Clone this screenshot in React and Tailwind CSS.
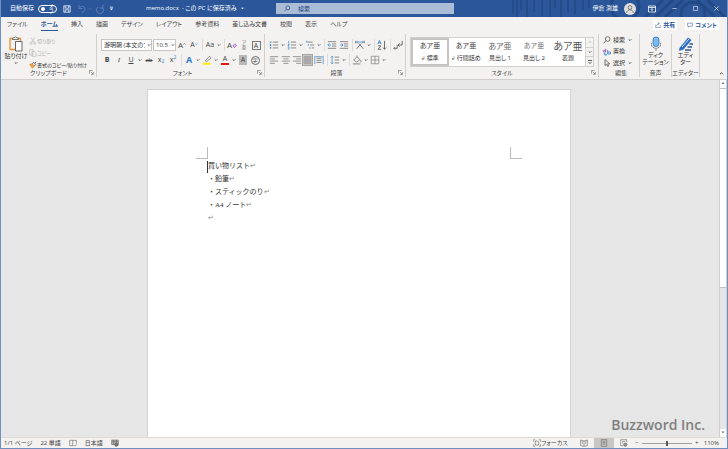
import React from "react";

const tabs = ["ファイル", "ホーム", "挿入", "描画", "デザイン", "レイアウト", "参考資料", "差し込み文書", "校閲", "表示", "ヘルプ"];

const styles = [
  { name: "標準", mark: true, sample: "text-[7px]" },
  { name: "行間詰め", mark: true, sample: "text-[7px]" },
  { name: "見出し 1", sample: "text-[8px] text-[#666]" },
  { name: "見出し 2", sample: "text-[7px] text-[#777]" },
  { name: "表題", sample: "text-[10px] text-[#555]" },
];

const lines = ["買い物リスト", "・鉛筆", "・スティックのり", "・A4 ノート", ""];

// Small line drawing on a 12x12 grid
const Icon = ({ children, className = "size-2.5" }) => (
  <svg viewBox="0 0 12 12" fill="none" stroke="#555" strokeWidth="0.8" className={className} aria-hidden="true">
    {children}
  </svg>
);

const Chevron = ({ className = "w-1.5 h-1.5" }) => (
  <svg viewBox="0 0 6 6" fill="none" stroke="currentColor" strokeWidth="0.8" className={className} aria-hidden="true">
    <path d="M1.700 2.300 3 3.600 4.300 2.300" />
  </svg>
);

const Tool = ({ label, caret, className = "w-3", children }) => (
  <button type="button" aria-label={label} className="flex items-center shrink-0 text-[#444]">
    <span className={`flex items-center justify-center h-3 ${className}`}>{children}</span>
    {caret && <Chevron />}
  </button>
);

const Sep = () => (
  <span className="flex justify-center w-1 shrink-0">
    <span className="w-px h-3 bg-[#dcdbda]" />
  </span>
);

const Launcher = () => (
  <button type="button" aria-label="詳細" className="absolute right-0.5 bottom-0.5">
    <svg viewBox="0 0 6 6" fill="none" stroke="#666" strokeWidth="0.7" className="size-[5px]">
      <path d="M.5 4.500v-4h4M2 2l3 3M5.300 2.500v2.800H2.500" />
    </svg>
  </button>
);

const Group = ({ title, launcher, className = "", children }) => (
  <section className={`relative flex flex-col shrink-0 border-r border-[#d2d0ce] ${className}`}>
    <div className="flex-1 min-h-0">{children}</div>
    <h2 className="h-2 text-center text-[6px] leading-2 text-[#444]">{title}</h2>
    {launcher && <Launcher />}
  </section>
);

const Rows = ({ d }) => (
  <Icon>
    <path d={d} stroke="#666" />
  </Icon>
);

const TitleBar = () => (
  <header className="relative flex items-center h-[17px] shrink-0 bg-[#2b579a] text-white text-[6px] overflow-hidden">
    <svg viewBox="0 0 250 17" fill="none" stroke="#234a86" className="absolute right-0 top-0 w-[250px] h-[17px]" aria-hidden="true">
      <path strokeWidth="1.5" d="M36 0v14M40 0v17M44 0v10M50 0v17M57 0v12M65 0v16M73 0v17M78 0v8M84 0v17M91 0v12M98 0v14M106 0v10M112 0v8" />
      <circle cx="148" cy="6" r="14" strokeWidth="3" />
      <path strokeWidth="3" d="M168 17 186 0M178 17 196 0M188 17 206 0M230 0l18 17M220 0l18 17" />
      <circle cx="216" cy="14" r="12" strokeWidth="3" />
    </svg>
    <div className="relative flex items-center flex-1 min-w-0 pl-[9px]">
      <label className="flex items-center gap-1">
        自動保存
        <input type="checkbox" className="peer sr-only" />
        <span className="flex items-center gap-1 w-[19px] h-2 px-0.5 border border-white rounded-full text-[5px] leading-none">
          <span className="size-1 shrink-0 rounded-full bg-white" />
          オフ
        </span>
      </label>
      <button type="button" aria-label="上書き保存" className="ml-1.5">
        <svg viewBox="0 0 10 10" fill="none" stroke="#fff" strokeWidth="0.9" className="size-2">
          <path d="M1 1h8v8H1zM2.800 1v3h4.400V1M2.800 9V6h4.400v3" />
        </svg>
      </button>
      <button type="button" aria-label="元に戻す" className="flex items-center ml-1.5 text-[#5b7db3]">
        <svg viewBox="0 0 10 10" fill="none" stroke="currentColor" className="size-2.5">
          <path d="M2 1v3.500h3.500M2 4.500C4 1.500 8 2 8 5c0 2-2 3-3.500 4" />
        </svg>
        <Chevron />
      </button>
      <button type="button" aria-label="やり直し" className="ml-0.5 text-[#5b7db3]">
        <svg viewBox="0 0 10 10" fill="none" stroke="currentColor" className="size-2.5">
          <path d="M8 1v3H5M8 4a3.600 3.600 0 1 1-5-1" />
        </svg>
      </button>
      <button type="button" aria-label="ツール バーのカスタマイズ" className="ml-1">
        <svg viewBox="0 0 6 6" className="size-[5px]" fill="#fff">
          <path d="M1 1h4v.8H1zM1 3h4L3 5z" />
        </svg>
      </button>
      <div className="flex items-center gap-1 mx-auto whitespace-nowrap">
        <h1>memo.docx&nbsp; - この PC に保存済み</h1>
        <svg viewBox="0 0 4 4" className="size-[3px]" fill="#fff">
          <path d="M0 1h4L2 3z" />
        </svg>
      </div>
    </div>
    <label className="relative flex items-center gap-2 w-[178px] h-[11px] px-2 bg-[#abbcd7]">
      <svg viewBox="0 0 8 8" fill="none" stroke="#1f3f77" strokeWidth="0.8" className="size-[7px]">
        <circle cx="4.800" cy="3.200" r="2.400" />
        <path d="M3 5 .7 7.300" />
      </svg>
      <input type="search" aria-label="検索" placeholder="検索" className="w-full h-2 text-[6px] leading-2 outline-none placeholder:text-[#1f3f77]" />
    </label>
    <div className="relative flex items-center justify-end flex-1 pr-2">
      <span>伊倉 渕雄</span>
      <svg viewBox="0 0 12 12" className="size-3 ml-1.5" aria-hidden="true">
        <circle cx="6" cy="6" r="6" fill="#e1dfdd" />
        <g fill="none" stroke="#666" strokeWidth="0.8">
          <circle cx="6" cy="4.500" r="1.900" />
          <path d="M2.700 9.800c.2-4 6.400-4 6.600 0" />
        </g>
      </svg>
      <button type="button" aria-label="リボンの表示オプション" className="ml-3">
        <svg viewBox="0 0 8 8" fill="none" stroke="#fff" strokeWidth="0.8" className="size-2">
          <path d="M.5 1h7v6h-7zM.5 2.500h7M4 6V3.700M2.800 4.800 4 3.600l1.200 1.200" />
        </svg>
      </button>
      <button type="button" aria-label="最小化" className="ml-4">
        <svg viewBox="0 0 6 6" stroke="#fff" strokeWidth="0.7" className="size-[5px]"><path d="M.5 3h5" /></svg>
      </button>
      <button type="button" aria-label="最大化" className="ml-4">
        <svg viewBox="0 0 6 6" fill="none" stroke="#fff" strokeWidth="0.7" className="size-[5px]"><path d="M.5.5h5v5h-5z" /></svg>
      </button>
      <button type="button" aria-label="閉じる" className="ml-4">
        <svg viewBox="0 0 6 6" stroke="#fff" strokeWidth="0.8" className="size-[5px]"><path d="m.5.5 5 5m0-5-5 5" /></svg>
      </button>
    </div>
  </header>
);

const TabRow = () => (
  <nav className="flex items-center h-4 shrink-0 pl-1.5 pr-2 text-[6px] text-[#444]">
    <div className="flex gap-[13px]">
      {tabs.map((tab) => (
        <a
          key={tab}
          href="#"
          className={`h-3 leading-[11px] whitespace-nowrap ${tab === "ホーム" ? "border-b border-[#2b579a] font-bold text-[#2b579a]" : ""}`}
        >
          {tab}
        </a>
      ))}
    </div>
    <div className="flex gap-2 ml-auto text-[#2b579a] font-bold">
      <button type="button" className="flex items-center gap-0.5 h-2.5 px-0.5 bg-white">
        <svg viewBox="0 0 8 8" fill="none" stroke="currentColor" strokeWidth="0.7" className="size-1.5">
          <path d="M1 3.500v4h6v-3M2.500 5c0-2 1.500-3 3-3M4.300.5 6 2 4.300 3.500" />
        </svg>
        共有
      </button>
      <button type="button" className="flex items-center gap-0.5 h-2.5 px-0.5 bg-white">
        <svg viewBox="0 0 8 8" fill="none" stroke="currentColor" strokeWidth="0.7" className="size-1.5">
          <path d="M.8 1.500h6.400v4H3.500L2 7V5.500H.8z" />
        </svg>
        コメント
      </button>
    </div>
  </nav>
);

const Clipboard = () => (
  <Group title="クリップボード" launcher className="w-24">
    <div className="flex gap-0.5 pl-1">
      <button type="button" className="flex flex-col items-center w-[22px] pt-0.5 text-[6px] leading-2 text-[#333] whitespace-nowrap">
        <svg viewBox="0 0 16 16" fill="none" className="size-4">
          <path d="M5 2.500H2v11h5M10 2.500h2.500V5" stroke="#e8912d" strokeWidth="1.300" />
          <path d="M4.500 3.500V2h1.700c.2-1.500 2.400-1.500 2.600 0h1.700v1.500z" fill="#fff" stroke="#555" strokeWidth="0.8" />
          <path d="M7.500 5.500h6.500v9.500H7.500z" fill="#fff" stroke="#555" strokeWidth="0.9" />
        </svg>
        貼り付け
        <Chevron />
      </button>
      <div className="flex flex-col pt-px text-[5px] leading-3 whitespace-nowrap text-[#b3b0ad]">
        <button type="button" disabled className="flex items-center h-3">
          <Icon className="size-2"><path d="m3 1 4.500 7M8.500 1 4 8" stroke="#aaa" /><circle cx="3" cy="9.500" r="1.600" stroke="#aaa" /><circle cx="8.500" cy="9.500" r="1.600" stroke="#aaa" /></Icon>
          切り取り
        </button>
        <button type="button" disabled className="flex items-center h-3">
          <Icon className="size-2"><path d="M1 1h5v8H1zM4.500 3.500H8l2.500 2.500v5h-6z" stroke="#aaa" fill="#f3f2f1" /></Icon>
          コピー
        </button>
        <button type="button" className="flex items-center h-3 text-[#333]">
          <Icon className="size-2">
            <path d="m1 5 4-1 3 4-3 3z" fill="#f0a040" stroke="#d97c12" />
            <path d="m5 4 2-2 3 3-2 2.500M8.500 3.500 11 1" stroke="#444" strokeWidth="1.200" />
          </Icon>
          書式のコピー/貼り付け
        </button>
      </div>
    </div>
  </Group>
);

const FontGroup = () => (
  <Group title="フォント" launcher className="w-[168px] pl-1">
    <div className="flex items-center pt-[5px]">
      <div className="relative w-[51px] mr-px">
        <select aria-label="フォント" className="block w-full h-3 pl-0.5 pr-1.5 border border-[#c8c6c4] bg-white appearance-none text-[6px] leading-2.5 text-[#333]">
          <option>游明朝 (本文のフォント)</option>
        </select>
        <Chevron className="absolute right-0 top-[3px] size-1.5 pointer-events-none" />
      </div>
      <div className="relative w-[23px]">
        <select aria-label="フォント サイズ" className="block w-full h-3 pl-0.5 border border-[#c8c6c4] bg-white appearance-none text-[6px] leading-2.5 text-[#333]">
          <option>10.5</option>
        </select>
        <Chevron className="absolute right-0 top-[3px] size-1.5 pointer-events-none" />
      </div>
      <Tool label="フォント サイズの拡大"><span className="text-[8px]">A</span><Icon className="w-[3px] h-2"><path d="m1 4 5-4 5 4" stroke="#444" strokeWidth="2" /></Icon></Tool>
      <Tool label="フォント サイズの縮小"><span className="text-[7px]">A</span><Icon className="w-[3px] h-2"><path d="m1 0 5 4 5-4" stroke="#2b88c8" strokeWidth="2" /></Icon></Tool>
      <Sep />
      <Tool label="文字種の変換" caret><span className="text-[7px]">Aa</span></Tool>
      <Sep />
      <Tool label="書式のクリア"><span className="text-[8px]">A</span><Icon className="w-[5px] h-2"><path d="m2 8 5-5 4 4-5 5z" stroke="#a33fb5" strokeWidth="1.500" fill="#e3bdea" /></Icon></Tool>
      <Tool label="ルビ"><span className="flex flex-col text-[5px] leading-[5px] text-[#777]"><span>ア</span><span>亜</span></span></Tool>
      <Tool label="囲み線"><span className="w-[9px] h-[9px] border border-[#777] text-[7px] leading-[7px]">A</span></Tool>
    </div>
    <div className="flex items-center pt-[3px]">
      <Tool label="太字"><b className="text-[7px]">B</b></Tool>
      <Tool label="斜体"><i className="text-[7px] font-['Liberation_Serif',serif]">I</i></Tool>
      <Tool label="下線" caret><u className="text-[7px]">U</u></Tool>
      <Tool label="取り消し線"><s className="text-[6px]">ab</s></Tool>
      <Tool label="下付き"><span className="text-[7px]">x<sub className="text-[5px] text-[#2b88c8]">2</sub></span></Tool>
      <Tool label="上付き"><span className="text-[7px]">x<sup className="text-[5px] text-[#2b88c8]">2</sup></span></Tool>
      <Sep />
      <Tool label="文字の効果" caret><b className="text-[9px] text-[#2b7cc9]">A</b></Tool>
      <Tool label="蛍光ペン" caret><Icon><path d="m4 7 5-5.500L11 3.500 5.500 8z" stroke="#555" fill="#fff" /><path d="M1 10.500h9" stroke="#ffee00" strokeWidth="2.400" /></Icon></Tool>
      <Tool label="フォントの色" caret><span className="w-2 text-[7px] leading-2 border-b-2 border-[#e81313]">A</span></Tool>
      <Tool label="文字の網かけ"><span className="w-2 h-2.5 bg-[#b9b8b7] text-[7px] leading-2.5">A</span></Tool>
      <Tool label="囲い文字"><span className="w-[9px] h-[9px] border border-[#666] rounded-full text-[5px] leading-[7px]">字</span></Tool>
    </div>
  </Group>
);

const Paragraph = () => (
  <Group title="段落" launcher className="w-[141px] pl-[3px]">
    <div className="flex items-center pt-[5px]">
      <Tool label="箇条書き" caret><Icon><path d="M4.500 2.500H11M4.500 6H11M4.500 9.500H11" /><path d="M1 2.500h1.700M1 6h1.700M1 9.500h1.700" stroke="#2b7cc9" strokeWidth="1.600" /></Icon></Tool>
      <Tool label="段落番号" caret><Icon><path d="M4.500 2.500H11M4.500 6H11M4.500 9.500H11" /><path d="M2 1v3M1 5h1.500v1L1 7h1.700M1 8.500h1.500v2.500H1" stroke="#2b7cc9" /></Icon></Tool>
      <Tool label="アウトライン" caret><Icon><path d="M3.500 2.500H9M6 6h5M8 9.500h3" /><path d="M1 1.500h1.500v2M4 5v2M6 8.500v2" stroke="#2b7cc9" /></Icon></Tool>
      <Sep />
      <Tool label="インデントを減らす"><Icon><path d="M1 2h10M6 4.700h5M6 7.300h5M1 10h10" /><path d="M5 6H1m2-2L1 6l2 2" stroke="#2b7cc9" /></Icon></Tool>
      <Tool label="インデントを増やす"><Icon><path d="M1 2h10M6 4.700h5M6 7.300h5M1 10h10" /><path d="M1 6h4M3 4l2 2-2 2" stroke="#2b7cc9" /></Icon></Tool>
      <Sep />
      <Tool label="拡張書式" caret><Icon><path d="m2 10.500 5-6M10 10.500 5 4.500M1 1v3M11 1v3" strokeWidth="1" /><path d="M2 2.500h8M3.500 1 2 2.500 3.500 4M8.500 1 10 2.500 8.500 4" stroke="#2b7cc9" /></Icon></Tool>
      <Sep />
      <Tool label="並べ替え">
        <Icon>
          <path d="m1 5 2-4.500L5 5M1.700 3.500h2.600" stroke="#2b7cc9" strokeWidth="1" />
          <path d="M1.200 7h3.500L1.200 11.200h3.800M9 1v10M7 9l2 2 2-2" strokeWidth="1" />
        </Icon>
      </Tool>
      <Sep />
      <Tool label="編集記号の表示"><Icon><path d="M11 1v5H6m2-2L6 6l2 2M5 6v4H1m1.500-1.500L1 10l1.500 1.500" strokeWidth="1" /></Icon></Tool>
    </div>
    <div className="flex items-center pt-[3px]">
      <Tool label="左揃え"><Rows d="M1 2h10M1 4.700h6M1 7.300h10M1 10h6" /></Tool>
      <Tool label="中央揃え" className="w-[11px]"><Rows d="M1 2h10M3 4.700h6M1 7.300h10M3 10h6" /></Tool>
      <Tool label="右揃え" className="w-[11px]"><Rows d="M1 2h10M5 4.700h6M1 7.300h10M5 10h6" /></Tool>
      <Tool label="両端揃え" className="w-[11px] bg-[#c8c6c4] border border-[#a8a6a4]"><Rows d="M1 2h10M1 4.700h10M1 7.300h10M1 10h10" /></Tool>
      <Tool label="均等割り付け"><Icon><path d="M3 4h6M3 6.500h6M3 9h6" /><path d="M1 1v10M11 1v10M2 2h8" stroke="#2b7cc9" /></Icon></Tool>
      <Sep />
      <Tool label="行間" caret><Icon><path d="M5.500 2.500H11M5.500 6H11M5.500 9.500H11" /><path d="M2.500 1.500v9M1 3l1.500-1.500L4 3M1 9l1.500 1.500L4 9" stroke="#2b7cc9" /></Icon></Tool>
      <Sep />
      <Tool label="塗りつぶし" caret><Icon><path d="m2 6 4-4 3.500 3.500-4 3zM6 2V.5M10 6c1.500 1.500 1 2.500 0 2.500" /><path d="M1 10.700h9" stroke="#8a8886" strokeWidth="1.200" /></Icon></Tool>
      <Tool label="罫線" caret><Icon><path d="M1.500 1.500h9v9h-9zM6 1.500v9M1.500 6h9" stroke="#777" /></Icon></Tool>
    </div>
  </Group>
);

const Styles = () => (
  <Group title="スタイル" launcher className="flex-1 min-w-[193px] px-1">
    <div className="flex h-[30px] mt-[3px] border border-[#d2d0ce] bg-white">
      {styles.map((s, i) => (
        <button
          key={s.name}
          type="button"
          className={`flex flex-col items-center justify-center flex-1 gap-1 whitespace-nowrap ${i === 0 ? "border-2 border-[#c6c4c2]" : ""}`}
        >
          <span className={`h-2 leading-2 ${s.sample}`}>あア亜</span>
          <span className="text-[6px] leading-2 text-[#333]">
            {s.mark && <span className="text-[5px]">↲ </span>}
            {s.name}
          </span>
        </button>
      ))}
      <div className="flex flex-col w-2 border-l border-[#d2d0ce] divide-y divide-[#d2d0ce] bg-[#f3f2f1]">
        <button type="button" aria-label="上へ" className="flex items-center justify-center flex-1 text-[#b3b0ad]"><Chevron className="size-1.5 rotate-180" /></button>
        <button type="button" aria-label="下へ" className="flex items-center justify-center flex-1"><Chevron /></button>
        <button type="button" aria-label="その他" className="flex items-center justify-center flex-1">
          <svg viewBox="0 0 6 6" className="size-1.5" fill="none" stroke="#333" strokeWidth="0.8"><path d="M1 1.500h4M1.500 3 3 4.500 4.500 3" /></svg>
        </button>
      </div>
    </div>
  </Group>
);

const Ribbon = () => (
  <div className="relative flex h-[46px] shrink-0 pt-px pb-0.5 text-[#444]">
    <Clipboard />
    <FontGroup />
    <Paragraph />
    <Styles />
    <Group title="編集" className="w-[41px] pl-1">
      <div className="flex flex-col text-[6px] text-[#333]">
        <button type="button" className="flex items-center gap-0.5 h-3">
          <Icon className="size-2"><circle cx="7" cy="4.500" r="3.500" strokeWidth="1.200" /><path d="M4.500 7 1 11" strokeWidth="1.200" /></Icon>
          検索 <Chevron />
        </button>
        <button type="button" className="flex items-center gap-0.5 h-[11px]">
          <Icon className="size-2"><path d="M4 1v5H1V3.500h3" stroke="#a33fb5" strokeWidth="1.200" /><path d="M7 3v6h4V6H7M2 7v3h3M4 8.500 5.500 10 4 11.500" stroke="#2b7cc9" strokeWidth="1.200" /></Icon>
          置換
        </button>
        <button type="button" className="flex items-center gap-0.5 h-3">
          <Icon className="size-2"><path d="M3 .8v9l2.300-2L7 11.300l1.500-.8L7 7.200h3z" strokeWidth="1.200" /></Icon>
          選択 <Chevron />
        </button>
      </div>
    </Group>
    <Group title="音声" className="w-8">
      <button type="button" className="flex flex-col items-center w-full pt-0.5 text-[6px] leading-[7px] text-[#333]">
        <svg viewBox="0 0 16 16" fill="none" className="size-4">
          <rect x="5" y="1" width="6" height="9.500" rx="3" fill="#7cb9ea" stroke="#2b7cc9" strokeWidth="0.8" />
          <path d="M3.500 7v1.500c0 5 9 5 9 0V7M8 12.500V15" stroke="#777" strokeWidth="0.8" />
        </svg>
        ディク<br />テーション
      </button>
    </Group>
    <Group title="エディター" className="w-[28px]">
      <button type="button" className="flex flex-col items-center w-full pt-0.5 text-[6px] leading-[7px] text-[#333]">
        <svg viewBox="0 0 16 16" fill="none" className="size-4">
          <path d="m1.500 12 8.500-10.500 3.500 2.500L5.500 13.500 1 15z" fill="#2b6cc4" />
          <path d="m4 11 7-8" stroke="#cfe2f7" />
          <path d="M11.500 8H15M9.500 11H14M7 14h6" stroke="#2b579a" strokeWidth="1.600" />
        </svg>
        エディ<br />ター
      </button>
    </Group>
    <button type="button" aria-label="リボンを折りたたむ" className="self-end ml-auto w-[27px] pl-[18px]">
      <Chevron className="size-[7px] rotate-180" />
    </button>
  </div>
);

const Document = () => (
  <main className="relative flex flex-1 min-h-0 border-t border-[#d0cfce] bg-[#e6e6e6]">
    <div className="flex-1 min-w-0 pl-5 pr-[22px] pt-[9px]">
      <article className="w-full max-w-[424px] h-full mx-auto px-12 pt-[57px] border border-b-0 border-[#d4d4d4] bg-white">
        <div className="flex justify-between">
          <span className="size-3 border-r border-b border-[#bbb]" />
          <span className="size-3 border-l border-b border-[#bbb]" />
        </div>
        <div className="relative pl-3 pt-px text-[7px] leading-[13px] text-[#333] font-['Liberation_Serif','Noto_Sans_CJK_JP',serif] [font-feature-settings:normal]">
          <span className="absolute left-[11px] top-0.5 w-px h-3 bg-[#333]" />
          {lines.map((line, i) => (
            <p key={i}>
              {line}
              <span className="text-[#888]">↵</span>
            </p>
          ))}
        </div>
      </article>
    </div>
    <div className="flex flex-col w-2 border-x border-[#d0cfce] bg-[#e6e6e6]">
      <button type="button" aria-label="上へスクロール" className="flex justify-center h-2 bg-white">
        <svg viewBox="0 0 6 6" className="size-1.5" fill="#777"><path d="M1.500 4h3L3 2z" /></svg>
      </button>
      <div className="h-[56%] border-y border-[#c0c0c0] bg-white" />
      <button type="button" aria-label="下へスクロール" className="flex justify-center h-2 mt-auto bg-white">
        <svg viewBox="0 0 6 6" className="size-1.5" fill="#777"><path d="M1.500 2.500h3L3 4.500z" /></svg>
      </button>
    </div>
    <div className="absolute right-[22px] bottom-0.5 text-sm font-semibold text-[#808080] font-['Open_Sans',sans-serif]">Buzzword Inc.</div>
  </main>
);

const StatusBar = () => (
  <footer className="flex items-center h-[11px] shrink-0 pl-[3px] pr-2 border-t border-[#dcdbda] bg-[#f3f2f1] text-[6px] leading-2 text-[#444] whitespace-nowrap">
    <div className="flex items-center gap-2">
      <span>1/1 ページ</span>
      <span>22 単語</span>
      <Icon className="size-2"><path d="M1 2h4.500v8H1zM5.500 2H11v5M5.500 10H7M8 9.500l1.200 1.200L11.500 8" /></Icon>
      <span>日本語</span>
      <Icon className="size-2"><path d="M1 1.500h10v7H1zM1 4h10M4 1.500v7M8 1.500v7" fill="#bbb" /><circle cx="8" cy="8.500" r="2.500" fill="#777" /></Icon>
    </div>
    <div className="flex items-center ml-auto">
      <button type="button" className="flex items-center mr-1.5">
        <Icon className="size-2"><path d="M1 4V1h2M9 1h2v3M1 8v3h2M9 11h2V8M3.500 3h3.500l1.500 1.500V9h-5z" /></Icon>
        フォーカス
      </button>
      <button type="button" aria-label="閲覧モード" className="flex justify-center w-5">
        <Icon className="size-2"><path d="M6 3 1 1.500V10l5 1 5-1V1.500zM6 3v8M2.500 4l2 .5M2.500 6l2 .5M7.500 4.500l2-.5M7.500 6.500l2-.5" /></Icon>
      </button>
      <button type="button" aria-label="印刷レイアウト" className="flex items-center justify-center w-5 h-2.5 bg-[#c8c6c4]">
        <Icon className="size-2"><path d="M2 1h8v10H2zM4 3.500h4M4 5.500h4M4 7.500h4" /></Icon>
      </button>
      <button type="button" aria-label="Web レイアウト" className="flex justify-center w-5">
        <Icon className="size-2"><path d="M1 1h9v4M1 1v9h4M3 3.500h5M3 6h2" /><circle cx="8" cy="8.500" r="2.500" fill="#999" /></Icon>
      </button>
      <button type="button" aria-label="縮小" className="w-1.5">−</button>
      <input
        type="range"
        aria-label="ズーム"
        defaultValue="50"
        className="w-[50px] h-px mx-0.5 bg-[#a19f9d] appearance-none [&::-webkit-slider-thumb]:appearance-none [&::-webkit-slider-thumb]:w-0.5 [&::-webkit-slider-thumb]:h-[5px] [&::-webkit-slider-thumb]:bg-[#555]"
      />
      <button type="button" aria-label="拡大" className="w-1.5">+</button>
      <span className="ml-1">110%</span>
    </div>
  </footer>
);

export default function App() {
  return (
    <div className="flex flex-col w-full h-screen border border-t-0 border-[#6f8fc0] bg-[#f3f2f1] font-['Open_Sans','Noto_Sans_CJK_JP',sans-serif] [font-feature-settings:'palt']">
      <TitleBar />
      <TabRow />
      <Ribbon />
      <Document />
      <StatusBar />
    </div>
  );
}
